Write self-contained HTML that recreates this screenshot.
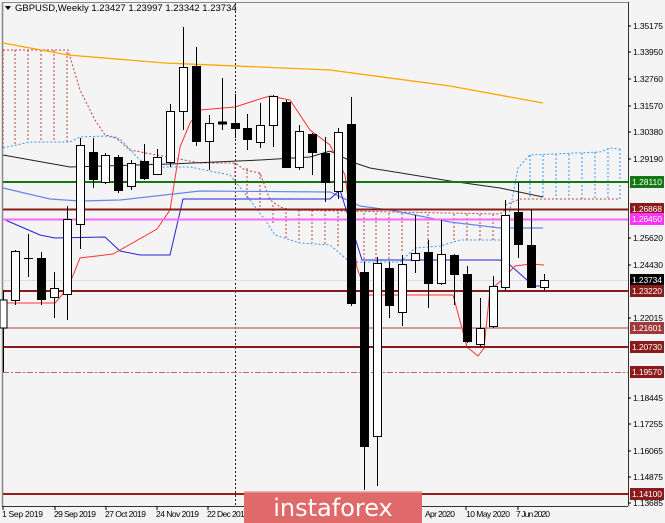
<!DOCTYPE html><html><head><meta charset="utf-8"><style>
html,body{margin:0;padding:0;background:#f4f4f4;}
svg{display:block;font-family:"Liberation Sans",sans-serif;}
</style></head><body>
<svg width="665" height="523" viewBox="0 0 665 523" xmlns="http://www.w3.org/2000/svg">
<rect width="665" height="523" fill="#f4f4f4"/>
<line x1="2.5" y1="2" x2="2.5" y2="506" stroke="#888" stroke-width="1.5"/>
<line x1="2" y1="2.5" x2="628" y2="2.5" stroke="#888"/>
<line x1="628.5" y1="2" x2="628.5" y2="506" stroke="#333"/>
<line x1="2" y1="506.5" x2="628" y2="506.5" stroke="#333"/>
<line x1="235.5" y1="3" x2="235.5" y2="506" stroke="#222" stroke-dasharray="2,2"/>
<line x1="3" y1="280.5" x2="628" y2="280.5" stroke="#dcdcf0"/>

<g stroke="#c04040" stroke-width="1" stroke-dasharray="2,2" fill="none">
<polyline points="3,50 68,50 80,90 95,120 105,135 115,137 130,150 200,163 235,163 245,170 260,173 270,200 280,207 290,210 500,214 505,210"/>
<line x1="3" y1="50" x2="3" y2="148"/><line x1="15" y1="50" x2="15" y2="146"/><line x1="28" y1="50" x2="28" y2="143"/><line x1="41" y1="50" x2="41" y2="142"/><line x1="54" y1="50" x2="54" y2="142"/><line x1="67" y1="52" x2="67" y2="142"/>
<line x1="235" y1="163" x2="235" y2="182"/><line x1="247" y1="168" x2="247" y2="199"/><line x1="260" y1="173" x2="260" y2="208"/><line x1="273" y1="205" x2="273" y2="225"/><line x1="286" y1="208" x2="286" y2="240"/><line x1="299" y1="210" x2="299" y2="243"/><line x1="312" y1="210" x2="312" y2="243"/><line x1="325" y1="210" x2="325" y2="244"/>
<line x1="338" y1="212" x2="338" y2="248"/><line x1="364" y1="213" x2="364" y2="262"/><line x1="376" y1="213" x2="376" y2="262"/><line x1="389" y1="213" x2="389" y2="262"/><line x1="402" y1="213" x2="402" y2="252"/><line x1="428" y1="214" x2="428" y2="246"/><line x1="454" y1="214" x2="454" y2="242"/><line x1="467" y1="214" x2="467" y2="241"/><line x1="480" y1="214" x2="480" y2="241"/><line x1="493" y1="214" x2="493" y2="241"/>
<polyline points="505,205 520,199 620,199"/>
</g>
<g stroke="#3399ff" stroke-width="1" stroke-dasharray="2,2" fill="none">
<polyline points="3,148 30,142 70,142 80,137 105,136 120,139 140,160 160,167 190,167 230,175 250,200 265,220 275,235 300,243 330,245 350,262 400,262 415,248 440,246 460,240 500,240 505,232 512,200 518,168 530,155 600,152 610,148 620,149"/>
<line x1="530" y1="155" x2="530" y2="199"/><line x1="543" y1="155" x2="543" y2="199"/><line x1="556" y1="154" x2="556" y2="199"/><line x1="569" y1="154" x2="569" y2="199"/><line x1="582" y1="153" x2="582" y2="199"/><line x1="595" y1="152" x2="595" y2="199"/><line x1="608" y1="148" x2="608" y2="199"/><line x1="620" y1="149" x2="620" y2="199"/>
</g>

<polyline fill="none" stroke="#ffa500" stroke-width="1.3" points="3,43 68,55 165,63 330,70 450,86 543,103"/>
<polyline fill="none" stroke="#222" stroke-width="1" points="3,155 70,167 170,164 260,160 310,157 330,151 355,163 370,168 450,181 500,188 543,197"/>
<polyline fill="none" stroke="#6688ee" stroke-width="1.2" points="3,188 50,199 80,201 120,200 200,191 330,192 360,206 390,210 450,222 500,228 543,228"/>
<polyline fill="none" stroke="#2222dd" stroke-width="1" points="3,219 40,235 55,238 105,237 120,251 140,255 170,255 183,199 330,199 340,190 362,260 500,260 510,265 527,280 532,286 544,286"/>
<polyline fill="none" stroke="#ff3333" stroke-width="1" points="7,303 55,303 62,295 72,278 80,258 105,255 113,254 157,229 170,210 180,147 190,123 200,110 235,107 263,98 270,96 290,100 310,130 330,145 345,175 357,268 367,295 453,295 467,347 478,356 484,348 490,290 502,280 515,266 531,264 544,265"/>

<line x1="3" y1="182" x2="628" y2="182" stroke="#137813" stroke-width="2"/>
<line x1="3" y1="209.5" x2="628" y2="209.5" stroke="#8b1a1a" stroke-width="2"/>
<line x1="3" y1="219.5" x2="628" y2="219.5" stroke="#ff66ff" stroke-width="2"/>
<line x1="3" y1="291" x2="628" y2="291" stroke="#8b1a1a" stroke-width="2"/>
<line x1="3" y1="328" x2="628" y2="328" stroke="#c08080" stroke-width="1.5"/>
<line x1="3" y1="347" x2="628" y2="347" stroke="#8b1a1a" stroke-width="2"/>
<line x1="3" y1="372.5" x2="628" y2="372.5" stroke="#c06060" stroke-width="1" stroke-dasharray="6,2,2,2"/>
<line x1="3" y1="494" x2="628" y2="494" stroke="#9b1a1a" stroke-width="2"/>

<g stroke="#000" stroke-width="1">
<line x1="3.5" y1="290" x2="3.5" y2="372"/><rect x="0" y="300" width="7" height="28" fill="#fff"/>
<line x1="15.5" y1="250" x2="15.5" y2="305"/><rect x="11.5" y="251.5" width="8" height="49" fill="#fff"/>
<line x1="28.5" y1="234" x2="28.5" y2="277"/><line x1="24" y1="258.5" x2="33" y2="258.5"/>
<line x1="41.5" y1="252" x2="41.5" y2="305"/><rect x="37.5" y="258.5" width="8" height="41" fill="#000"/>
<line x1="54.5" y1="272" x2="54.5" y2="318"/><rect x="50.5" y="288.5" width="8" height="9" fill="#fff"/>
<line x1="67.5" y1="206" x2="67.5" y2="320"/><rect x="63.5" y="219.5" width="8" height="75" fill="#fff"/>
<line x1="80.5" y1="138" x2="80.5" y2="249"/><rect x="76.5" y="145.5" width="8" height="79" fill="#fff"/>
<line x1="93.5" y1="138" x2="93.5" y2="188"/><rect x="89.5" y="152.5" width="8" height="27" fill="#000"/>
<line x1="105.5" y1="153" x2="105.5" y2="184"/><rect x="101.5" y="155.5" width="8" height="27" fill="#fff"/>
<line x1="118.5" y1="155" x2="118.5" y2="193"/><rect x="114.5" y="157.5" width="8" height="33" fill="#000"/>
<line x1="131.5" y1="160" x2="131.5" y2="190"/><rect x="127.5" y="163.5" width="8" height="23" fill="#fff"/>
<line x1="144.5" y1="144" x2="144.5" y2="180"/><rect x="140.5" y="161.5" width="8" height="17" fill="#000"/>
<line x1="157.5" y1="149" x2="157.5" y2="175"/><rect x="153.5" y="157.5" width="8" height="17" fill="#fff"/>
<line x1="170.5" y1="104" x2="170.5" y2="167"/><rect x="166.5" y="111.5" width="8" height="51" fill="#fff"/>
<line x1="183.5" y1="27" x2="183.5" y2="130"/><rect x="179.5" y="67.5" width="8" height="44" fill="#fff"/>
<line x1="196.5" y1="47" x2="196.5" y2="146"/><rect x="192.5" y="66.5" width="8" height="75" fill="#000"/>
<line x1="209.5" y1="115" x2="209.5" y2="170"/><rect x="205.5" y="123.5" width="8" height="18" fill="#fff"/>
<line x1="222.5" y1="78" x2="222.5" y2="130"/><rect x="218.5" y="122" width="8" height="2" fill="#000"/>
<line x1="235.5" y1="94" x2="235.5" y2="138"/><rect x="231.5" y="123.5" width="8" height="5" fill="#000"/>
<line x1="247.5" y1="114" x2="247.5" y2="150"/><rect x="243.5" y="128.5" width="8" height="11" fill="#000"/>
<line x1="260.5" y1="103" x2="260.5" y2="148"/><rect x="256.5" y="125.5" width="8" height="17" fill="#fff"/>
<line x1="273.5" y1="95" x2="273.5" y2="147"/><rect x="269.5" y="96.5" width="8" height="29" fill="#fff"/>
<line x1="286.5" y1="100" x2="286.5" y2="168"/><rect x="282.5" y="102.5" width="8" height="65" fill="#000"/>
<line x1="299.5" y1="125" x2="299.5" y2="170"/><rect x="295.5" y="131.5" width="8" height="36" fill="#fff"/>
<line x1="312.5" y1="133" x2="312.5" y2="175"/><rect x="308.5" y="134.5" width="8" height="18" fill="#000"/>
<line x1="325.5" y1="137" x2="325.5" y2="202"/><rect x="321.5" y="153.5" width="8" height="29" fill="#000"/>
<line x1="338.5" y1="128" x2="338.5" y2="199"/><rect x="334.5" y="132.5" width="8" height="59" fill="#fff"/>
<line x1="351.5" y1="97" x2="351.5" y2="306"/><rect x="347.5" y="124.5" width="8" height="179" fill="#000"/>
<line x1="364.5" y1="262" x2="364.5" y2="490"/><rect x="360.5" y="272.5" width="8" height="174" fill="#000"/>
<line x1="377.5" y1="257" x2="377.5" y2="486"/><rect x="373.5" y="263.5" width="8" height="173" fill="#fff"/>
<line x1="389.5" y1="262" x2="389.5" y2="318"/><rect x="385.5" y="268.5" width="8" height="37" fill="#000"/>
<line x1="402.5" y1="255" x2="402.5" y2="326"/><rect x="398.5" y="264.5" width="8" height="48" fill="#fff"/>
<line x1="415.5" y1="215" x2="415.5" y2="273"/><rect x="411.5" y="253.5" width="8" height="7" fill="#fff"/>
<line x1="428.5" y1="240" x2="428.5" y2="308"/><rect x="424.5" y="252.5" width="8" height="31" fill="#000"/>
<line x1="441.5" y1="220" x2="441.5" y2="285"/><rect x="437.5" y="254.5" width="8" height="29" fill="#fff"/>
<line x1="454.5" y1="254" x2="454.5" y2="305"/><rect x="450.5" y="255.5" width="8" height="19" fill="#000"/>
<line x1="467.5" y1="266" x2="467.5" y2="343"/><rect x="463.5" y="274.5" width="8" height="67" fill="#000"/>
<line x1="480.5" y1="298" x2="480.5" y2="347"/><rect x="476.5" y="328.5" width="8" height="16" fill="#fff"/>
<line x1="493.5" y1="276" x2="493.5" y2="328"/><rect x="489.5" y="286.5" width="8" height="40" fill="#fff"/>
<line x1="505.5" y1="200" x2="505.5" y2="290"/><rect x="501.5" y="215.5" width="8" height="72" fill="#fff"/>
<line x1="518.5" y1="182" x2="518.5" y2="258"/><rect x="514.5" y="212.5" width="8" height="32" fill="#000"/>
<line x1="531.5" y1="210" x2="531.5" y2="288"/><rect x="527.5" y="245.5" width="8" height="42" fill="#000"/>
<line x1="544.5" y1="274" x2="544.5" y2="290"/><rect x="540.5" y="280.5" width="8" height="7" fill="#fff"/>
</g>

<path d="M5,6 L11,6 L8,10 Z" fill="#000"/>
<text x="15" y="11" font-size="9.5" fill="#000">GBPUSD,Weekly  1.23427 1.23997 1.23342 1.23734</text>

<g font-size="8.5" fill="#000">
<g stroke="#000"><line x1="628" y1="26" x2="631" y2="26"/><line x1="628" y1="52" x2="631" y2="52"/><line x1="628" y1="79" x2="631" y2="79"/><line x1="628" y1="106" x2="631" y2="106"/><line x1="628" y1="132" x2="631" y2="132"/><line x1="628" y1="159" x2="631" y2="159"/><line x1="628" y1="238" x2="631" y2="238"/><line x1="628" y1="265" x2="631" y2="265"/><line x1="628" y1="318" x2="631" y2="318"/><line x1="628" y1="398" x2="631" y2="398"/><line x1="628" y1="424" x2="631" y2="424"/><line x1="628" y1="451" x2="631" y2="451"/><line x1="628" y1="477" x2="631" y2="477"/><line x1="628" y1="503" x2="631" y2="503"/></g>
<text x="633" y="29" textLength="30">1.35175</text><text x="633" y="55" textLength="30">1.33950</text><text x="633" y="82" textLength="30">1.32760</text><text x="633" y="109" textLength="30">1.31570</text><text x="633" y="135" textLength="30">1.30380</text><text x="633" y="162" textLength="30">1.29190</text><text x="633" y="241" textLength="30">1.25620</text><text x="633" y="268" textLength="30">1.24430</text><text x="633" y="321" textLength="30">1.22015</text><text x="633" y="401" textLength="30">1.18445</text><text x="633" y="427" textLength="30">1.17255</text><text x="633" y="454" textLength="30">1.16065</text><text x="633" y="480" textLength="30">1.14875</text><text x="633" y="506" textLength="30">1.13685</text>
</g>
<g font-size="8.5" fill="#fff">
<rect x="630" y="176" width="34" height="12" fill="#137813"/><text x="632" y="185" textLength="30">1.28110</text>
<rect x="630" y="203" width="34" height="12" fill="#8b1a1a"/><text x="632" y="212" textLength="30">1.26868</text>
<rect x="630" y="213" width="34" height="12" fill="#ff33ff"/><text x="632" y="222" textLength="30">1.26450</text>
<rect x="630" y="274" width="34" height="12" fill="#000"/><text x="632" y="283" textLength="30">1.23734</text>
<rect x="630" y="285" width="34" height="12" fill="#8b1a1a"/><text x="632" y="294" textLength="30">1.23220</text>
<rect x="630" y="322" width="34" height="12" fill="#a03a3a"/><text x="632" y="331" textLength="30">1.21601</text>
<rect x="630" y="341" width="34" height="12" fill="#8b1a1a"/><text x="632" y="350" textLength="30">1.20730</text>
<rect x="630" y="366" width="34" height="12" fill="#8b1a1a"/><text x="632" y="375" textLength="30">1.19570</text>
<rect x="630" y="488" width="34" height="12" fill="#8b1a1a"/><text x="632" y="497" textLength="30">1.14100</text>
</g>

<g stroke="#000"><line x1="3" y1="506" x2="3" y2="510"/><line x1="55" y1="506" x2="55" y2="510"/><line x1="106" y1="506" x2="106" y2="510"/><line x1="157" y1="506" x2="157" y2="510"/><line x1="208" y1="506" x2="208" y2="510"/><line x1="410" y1="506" x2="410" y2="510"/><line x1="466" y1="506" x2="466" y2="510"/><line x1="518" y1="506" x2="518" y2="510"/></g>
<g font-size="8.5" fill="#000">
<text x="2" y="517" textLength="41">1 Sep 2019</text><text x="54" y="517" textLength="42">29 Sep 2019</text><text x="105" y="517" textLength="41">27 Oct 2019</text><text x="156" y="517" textLength="43">24 Nov 2019</text><text x="207" y="517" textLength="42">22 Dec 2019</text><text x="425" y="517" textLength="30">Apr 2020</text><text x="466" y="517" textLength="44">10 May 2020</text><text x="516" y="517" textLength="34">7 Jun 2020</text>
</g>

<rect x="244" y="491" width="178" height="32" fill="#e06a6a"/>
<rect x="244" y="491" width="178" height="1.5" fill="#f0b0b0"/>
<text x="333" y="516" font-size="24" fill="#fff" text-anchor="middle" font-family="'DejaVu Sans','Liberation Sans',sans-serif">instaforex</text>
</svg>
</body></html>
